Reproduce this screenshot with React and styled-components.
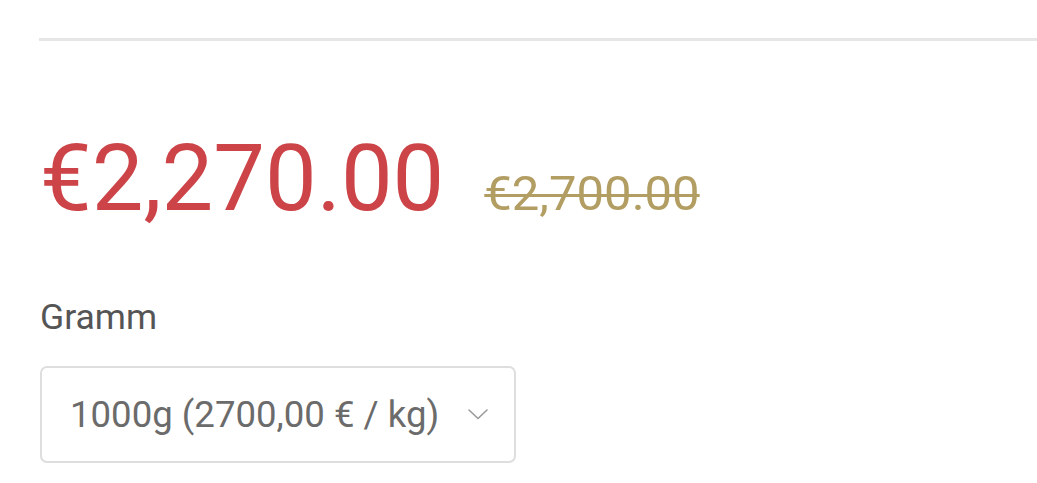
import styled, { createGlobalStyle } from "styled-components";

const GlobalStyle = createGlobalStyle`
  html, body {
    margin: 0;
    padding: 0;
    background: #fff;
  }
  body {
    font-family: Roboto, "Liberation Sans", sans-serif;
  }
`;

const Page = styled.div`
  padding: 38px 0 0 40px;
`;

const Divider = styled.hr`
  margin: 0 0 0 -1px;
  border: none;
  height: 3px;
  background: #e6e6e6;
`;

const PriceRow = styled.div`
  display: flex;
  align-items: baseline;
  gap: 40px;
  margin-top: 92px;
`;

const Price = styled.span`
  font-size: 92px;
  line-height: 1;
  color: #cc4448;
`;

const OldPrice = styled.del`
  font-size: 49px;
  line-height: 1;
  color: #b29d62;
  text-decoration-thickness: 3px;
`;

const Label = styled.div`
  margin-top: 75px;
  font-size: 35.5px;
  line-height: 1;
  color: #555;
`;

const Select = styled.div`
  box-sizing: border-box;
  margin-top: 30px;
  width: 476px;
  height: 97px;
  border: 2px solid #dedede;
  border-radius: 7px;
  padding: 0 26px 0 28px;
  display: flex;
  align-items: center;
  justify-content: space-between;
  font-size: 36.6px;
  color: #6b6b6b;
`;

const Chevron = () => (
  <svg width="20" height="11" viewBox="0 0 20 11" fill="none">
    <polyline
      points="1,1 10,9.5 19,1"
      stroke="#9a9a9a"
      strokeWidth="1.6"
      strokeLinecap="round"
      strokeLinejoin="round"
    />
  </svg>
);

export default function App() {
  return (
    <Page>
      <GlobalStyle />
      <Divider />
      <PriceRow>
        <Price>€2,270.00</Price>
        <OldPrice>€2,700.00</OldPrice>
      </PriceRow>
      <Label>Gramm</Label>
      <Select>
        <span>1000g (2700,00 € / kg)</span>
        <Chevron />
      </Select>
    </Page>
  );
}
